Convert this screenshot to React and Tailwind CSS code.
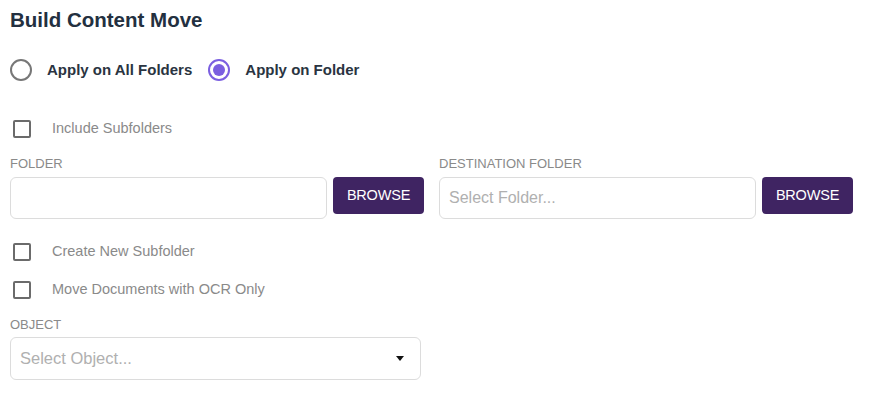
import React, { useState } from "react";

function Radio({ checked, label, onClick }) {
  return (
    <button type="button" onClick={onClick} className="flex items-center h-6">
      <span
        className={
          "w-[22px] h-[22px] rounded-full border-2 flex items-center justify-center " +
          (checked ? "border-[#7b5fe0]" : "border-[#777777]")
        }
      >
        {checked && <span className="w-[12px] h-[12px] rounded-full bg-[#7b5fe0]" />}
      </span>
      <span className="ml-[15px] text-[15px] font-bold text-[#2a3441]">{label}</span>
    </button>
  );
}

function Check({ label }) {
  const [on, setOn] = useState(false);
  return (
    <label className="flex items-center h-6 cursor-pointer">
      <span
        onClick={() => setOn(!on)}
        className={
          "ml-[3px] w-[18px] h-[18px] rounded-[2px] border-2 border-[#6b6b6b] " +
          (on ? "bg-[#6b6b6b]" : "bg-white")
        }
      />
      <span className="ml-[21px] text-[14.5px] text-[#8a8a8a]">{label}</span>
    </label>
  );
}

function FolderPicker({ label, placeholder }) {
  return (
    <div className="w-[414px]">
      <div className="h-4 leading-[18px] text-[13px] text-[#8a8a8a] uppercase">{label}</div>
      <div className="mt-[6px] flex items-start gap-[6px]">
        <input
          placeholder={placeholder}
          className="w-[317px] h-[42px] rounded-[6px] border border-[#dcdcdc] px-[9px] text-[16px] text-[#333] placeholder:text-[#b0b0b0] outline-none"
        />
        <button className="w-[91px] h-[37px] rounded-[4px] bg-[#3f2462] text-white text-[14.5px] tracking-[-0.2px]">
          BROWSE
        </button>
      </div>
    </div>
  );
}

export default function App() {
  const [mode, setMode] = useState("folder");
  return (
    <div className="min-h-screen bg-white pl-[10px] pt-[8px] font-['Liberation_Sans',Arial,sans-serif]">
      <h1 className="h-6 leading-6 text-[20.5px] font-bold text-[#233040]">Build Content Move</h1>

      <div className="mt-[26px] flex items-center gap-[16px]">
        <Radio checked={mode === "all"} label="Apply on All Folders" onClick={() => setMode("all")} />
        <Radio checked={mode === "folder"} label="Apply on Folder" onClick={() => setMode("folder")} />
      </div>

      <div className="mt-[35px]">
        <Check label="Include Subfolders" />
      </div>

      <div className="mt-[14px] flex gap-[15px]">
        <FolderPicker label="Folder" placeholder="" />
        <FolderPicker label="Destination Folder" placeholder="Select Folder..." />
      </div>

      <div className="mt-[21px]">
        <Check label="Create New Subfolder" />
      </div>
      <div className="mt-[14px]">
        <Check label="Move Documents with OCR Only" />
      </div>

      <div className="mt-[14px] h-4 leading-[18px] text-[13px] text-[#8a8a8a] uppercase">Object</div>
      <div className="mt-[5px] w-[411px] h-[43px] rounded-[6px] border border-[#dcdcdc] flex items-center justify-between pl-[9px] pr-[16px]">
        <span className="text-[16.5px] text-[#b0b0b0]">Select Object...</span>
        <svg width="8" height="5" viewBox="0 0 8 5">
          <path d="M0 0 L8 0 L4 5 Z" fill="#111" />
        </svg>
      </div>
    </div>
  );
}
